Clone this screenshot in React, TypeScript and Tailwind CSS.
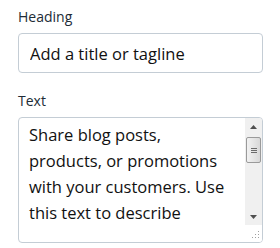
import React from "react";

function Arrow({ up }: { up: boolean }) {
  return (
    <div className="h-[17px] flex items-center justify-center">
      <svg width="7" height="4" viewBox="0 0 7 4">
        {up ? (
          <polygon points="3.5,0 7,4 0,4" fill="#505050" />
        ) : (
          <polygon points="0,0 7,0 3.5,4" fill="#505050" />
        )}
      </svg>
    </div>
  );
}

function Scrollbar() {
  return (
    <div className="w-[17px] flex flex-col">
      <div className="flex-1 bg-[#f0f0f0] flex flex-col">
        <Arrow up />
        <div className="flex-1 px-[1px] pt-[2px]">
          <div className="h-[26px] rounded-[2px] border border-[#9a9a9a] bg-gradient-to-r from-[#f2f2f2] to-[#d8d8d8] flex flex-col items-center justify-center gap-[1px]">
            <div className="w-[6px] h-[1px] bg-[#6a6a6a]" />
            <div className="w-[6px] h-[1px] bg-[#6a6a6a]" />
            <div className="w-[6px] h-[1px] bg-[#6a6a6a]" />
          </div>
        </div>
        <Arrow up={false} />
      </div>
      <div className="h-[17px] bg-white flex items-end justify-end pr-[2px] pb-[3px]">
        <svg width="9" height="9" viewBox="0 0 9 9">
          <rect x="7" y="1" width="1" height="1" fill="#a0a0a0" />
          <rect x="4" y="4" width="1" height="1" fill="#a0a0a0" />
          <rect x="7" y="4" width="1" height="1" fill="#a0a0a0" />
          <rect x="1" y="7" width="1" height="1" fill="#a0a0a0" />
          <rect x="4" y="7" width="1" height="1" fill="#a0a0a0" />
          <rect x="7" y="7" width="1" height="1" fill="#a0a0a0" />
        </svg>
      </div>
    </div>
  );
}

export default function App() {
  const lines = [
    "Share blog posts,",
    "products, or promotions",
    "with your customers. Use",
    "this text to describe",
  ];
  return (
    <div className="w-[280px] h-[248px] bg-white pl-[18px] pr-[17px] pt-[7px] font-['Open_Sans',sans-serif] text-[#1f2328]">
      <label className="block text-[14px] leading-[20px] mb-[6px] text-[#212b36]">Heading</label>
      <input
        readOnly
        value="Add a title or tagline"
        className="block w-full h-[40px] px-[11px] border border-[#c4cdd5] rounded-[4px] text-[16.5px] text-[#111] outline-none bg-white"
      />
      <label className="block mt-[18px] text-[14px] leading-[20px] mb-[6px] text-[#212b36]">Text</label>
      <div className="h-[126px] border border-[#c4cdd5] rounded-[4px] flex overflow-hidden bg-white">
        <div className="flex-1 pl-[10px] pt-[4px] text-[16.5px] leading-[26px] text-[#111] whitespace-nowrap overflow-hidden">
          {lines.map((l) => (
            <div key={l}>{l}</div>
          ))}
        </div>
        <Scrollbar />
      </div>
    </div>
  );
}
